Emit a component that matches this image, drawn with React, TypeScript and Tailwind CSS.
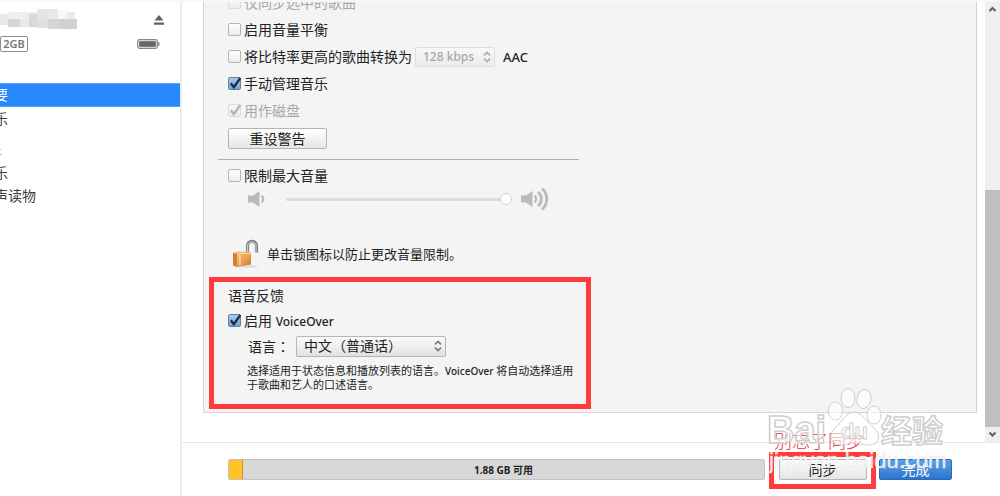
import React, { useState } from 'react';
import clsx from 'clsx';

type CheckProps = {
    id: string;
    label: React.ReactNode;
    checked?: boolean;
    disabled?: boolean;
};

function Check({ id, label, checked = false, disabled = false }: CheckProps) {
    const [on, setOn] = useState(checked);

    return (
        <div className="flex items-center gap-[3px]">
            <span className="relative flex">
                <input
                    id={id}
                    type="checkbox"
                    checked={on}
                    disabled={disabled}
                    onChange={(e) => setOn(e.target.checked)}
                    className="h-[13px] w-[13px] appearance-none rounded-xs border border-[#b4b4b4] bg-linear-to-b from-white to-[#ececec] checked:border-[#5f83a8] checked:from-[#a9c8e6] checked:to-[#7ba5cf] disabled:border-[#dcdcdc] disabled:from-[#f6f6f6] disabled:to-[#ededed]"
                />
                {on && (
                    <svg viewBox="0 0 15 15" className="pointer-events-none absolute -top-px left-0 h-[15px] w-[15px]" fill="none">
                        <path d="M2.8 7.2L5.8 11.2L12.4 2" stroke={disabled ? '#b5b5b5' : '#1b2f4b'} strokeWidth="2.3" />
                    </svg>
                )}
            </span>
            <label htmlFor={id} className={clsx('whitespace-nowrap', disabled && 'text-[#a8a8a8]')}>{label}</label>
        </div>
    );
}

function Chevrons({ color }: { color: string }) {
    return (
        <svg viewBox="0 0 8 12" className="pointer-events-none absolute top-1/2 right-1 h-3 w-2 -translate-y-1/2" fill="none" stroke={color} strokeWidth="1.5">
            <path d="M1 4.4L4 1.4L7 4.4M1 7.6L4 10.6L7 7.6" />
        </svg>
    );
}

function Speaker({ loud = false }: { loud?: boolean }) {
    return (
        <svg viewBox={loud ? '0 0 28 24' : '0 0 19 24'} className={clsx('h-6 shrink-0', loud ? 'w-7' : 'w-[19px]')} fill="none" stroke="#bababa" strokeWidth="2">
            <path d="M0 8.5H5L11.5 4V20L5 15.5H0Z" fill="#bababa" stroke="none" />
            <path d="M13.5 8.7A4 4 0 0 1 13.5 15.3" strokeWidth="2.3" />
            {loud && <path d="M17 5A9 9 0 0 1 17 19M21 1.5A14 14 0 0 1 21 22.5" strokeWidth="2.8" />}
        </svg>
    );
}

function Padlock() {
    return (
        <svg viewBox="0 0 28 30" className="h-[30px] w-7 shrink-0" fill="none">
            <defs>
                <linearGradient id="brass" x1="0" y1="0" x2="1" y2="1">
                    <stop offset="0" stopColor="#f6c67c" />
                    <stop offset="0.5" stopColor="#efa955" />
                    <stop offset="1" stopColor="#c9762b" />
                </linearGradient>
            </defs>
            <ellipse cx="16" cy="27.5" rx="10" ry="1.5" fill="#dedede" />
            <path d="M15.5 14V7C15.5 0.8 24.5 0.8 24.5 7V13.5" stroke="#858585" strokeWidth="3.2" />
            <path d="M15.5 13V7C15.5 1.8 24 1.8 24 7V13" stroke="#c9c9c9" strokeWidth="1" />
            <path d="M1 14L5 12.5L19 13V25.5L5 28L1 26.5Z" fill="url(#brass)" />
            <path d="M1 14L5 14.8V28L1 26.5Z" fill="#cf8237" />
            <path d="M5 14.8L19 14" stroke="#fbdcae" strokeWidth="1" />
            <path d="M8 16V26" stroke="#f9d6a0" strokeWidth="1.6" />
        </svg>
    );
}

// blocks covering the device name
const nameBlocks: [number, number, number, number, string][] = [
    [0, 6, 10, 11, '#e9e9e9'],
    [8, 4, 12, 12, '#f0eeee'],
    [20, 4, 18, 8, '#eeecec'],
    [8, 11, 12, 8, '#d7d5d5'],
    [20, 12, 10, 7, '#ebe8e8'],
    [29, 6, 9, 13, '#ddd8d8'],
    [37, 1, 12, 11, '#e2e6e7'],
    [37, 11, 12, 9, '#dce1e3'],
    [49, 1, 9, 11, '#e8eaea'],
    [58, 2, 10, 10, '#f5f8fa'],
    [67, 4, 8, 8, '#e9ebec'],
    [48, 11, 12, 10, '#d4d5d5'],
    [60, 11, 17, 10, '#d0d1d2'],
];

function Sidebar() {
    return (
        <aside className="w-[182px] shrink-0 overflow-hidden border-r-2 border-[#ececec] bg-white pt-[6px]">
            <div className="flex items-start justify-between pr-4">
                <svg viewBox="0 0 78 22" className="h-[22px] w-[78px]">
                    {nameBlocks.map(([x, y, w, h, fill], i) => (
                        <rect key={i} x={x} y={y} width={w} height={h} fill={fill} />
                    ))}
                </svg>
                <button type="button" aria-label="弹出" className="mt-[7px]">
                    <svg viewBox="0 0 10 10" className="h-[10px] w-[10px]" fill="#626262">
                        <path d="M5 0L9.5 5.5H0.5ZM0 7.6H10V9.7H0Z" />
                    </svg>
                </button>
            </div>
            <div className="mt-[6px] flex items-center justify-between pr-5">
                <span className="flex h-4 w-7 items-center justify-center rounded-xs border border-[#8c8c8c] text-[11px] font-semibold text-[#777]">2GB</span>
                <svg viewBox="0 0 23 10" className="h-[10px] w-[23px]">
                    <rect x="0.7" y="0.7" width="19.6" height="8.6" rx="1.8" fill="#eee" stroke="#858585" strokeWidth="1.2" />
                    <rect x="2.2" y="2.2" width="16.6" height="5.6" fill="#666" />
                    <path d="M21 3.2H22.4V6.8H21Z" fill="#858585" />
                </svg>
            </div>
            <nav className="mt-[31px] flex flex-col whitespace-nowrap text-[#3c3c3c]">
                <a href="#summary" className="flex h-6 items-center border-y border-[#5aa2f8] bg-[#2688fb] text-white"><span className="-ml-5">摘要</span></a>
                <a href="#music" className="flex h-[23px] items-center"><span className="-ml-5">音乐</span></a>
                <h2 className="mt-[13px] -ml-[31px] flex h-4 items-center text-[11px] text-[#8795a3]">设备上</h2>
                <a href="#device-music" className="mt-[2px] flex h-[23px] items-center"><span className="-ml-5">音乐</span></a>
                <a href="#audiobooks" className="flex h-[23px] items-center"><span className="-ml-5">有声读物</span></a>
            </nav>
        </aside>
    );
}

function VoiceFeedback() {
    return (
        <section className="mt-2 ml-[5px] w-[382px] border-5 border-[#ff3b3b] pt-[2px] pb-3 pl-[14px]">
            <h3 className="flex h-6 items-center">语音反馈</h3>
            <div className="flex h-[25px] items-center">
                <Check id="voiceover" checked label={<>启用 <span className="text-xs font-medium">VoiceOver</span></>} />
            </div>
            <div className="ml-5 flex h-[26px] items-center gap-1.5">
                <label htmlFor="language">语言<span className="font-['Noto_Sans_CJK_JP',sans-serif]">：</span></label>
                <span className="relative flex">
                    <select id="language" className="h-[21px] w-[150px] appearance-none rounded-xs border border-[#b5b5b5] bg-linear-to-b from-[#fbfbfb] to-[#e2e2e2] pl-[7px] leading-[18px]">
                        <option>中文（普通话）</option>
                    </select>
                    <Chevrons color="#777" />
                </span>
            </div>
            <p className="mt-[5px] ml-[19px] text-[11px] leading-[14px]">
                选择适用于状态信息和播放列表的语言。<span className="text-[10px] font-medium">VoiceOver</span> 将自动选择适用<br />于歌曲和艺人的口述语言。
            </p>
        </section>
    );
}

function Settings() {
    return (
        <div className="mr-2 ml-[21px] flex-1 self-start overflow-hidden border-x border-b border-[#d4d4d4] bg-[#f4f4f4] pb-[3px]">
            <div className="-mt-[13px] pl-6 [&>div]:h-[27px]">
                <div className="flex items-center"><Check id="selected-only" disabled label="仅同步选中的歌曲" /></div>
                <div className="flex items-center"><Check id="balance" label="启用音量平衡" /></div>
                <div className="flex items-center">
                    <Check id="convert" label="将比特率更高的歌曲转换为" />
                    <span className="relative ml-[3px] flex">
                        <select aria-label="比特率" disabled className="h-5 w-20 appearance-none rounded-xs border border-[#dedede] bg-linear-to-b from-[#f8f8f8] to-[#ececec] pl-[7px] text-xs font-medium text-[#a8a8a8] opacity-100">
                            <option>128 kbps</option>
                        </select>
                        <Chevrons color="#aaa" />
                    </span>
                    <span className="ml-2 text-[13px] font-medium">AAC</span>
                </div>
                <div className="flex items-center"><Check id="manual" checked label="手动管理音乐" /></div>
                <div className="flex items-center"><Check id="disk" checked disabled label="用作磁盘" /></div>
            </div>
            <button type="button" className="mt-1 ml-6 flex h-[21px] w-[99px] items-center justify-center rounded-xs border border-[#b5b5b5] bg-linear-to-b from-white to-[#e6e6e6]">重设警告</button>
            <hr className="mt-[10px] ml-[14px] w-[361px] border-[#b0b0b0]" />
            <div className="mt-[2px] ml-6 flex h-[27px] items-center"><Check id="limit" label="限制最大音量" /></div>
            <div className="ml-11 flex h-5 items-center">
                <Speaker />
                <input
                    type="range"
                    aria-label="最大音量"
                    defaultValue={100}
                    disabled
                    className="mr-[9px] ml-[19px] h-3 w-[226px] appearance-none bg-transparent [&::-webkit-slider-runnable-track]:h-[3px] [&::-webkit-slider-runnable-track]:rounded-full [&::-webkit-slider-runnable-track]:bg-[#dcdcdc] [&::-webkit-slider-thumb]:-mt-[5px] [&::-webkit-slider-thumb]:h-3 [&::-webkit-slider-thumb]:w-3 [&::-webkit-slider-thumb]:appearance-none [&::-webkit-slider-thumb]:rounded-full [&::-webkit-slider-thumb]:border [&::-webkit-slider-thumb]:border-[#d4d4d4] [&::-webkit-slider-thumb]:bg-white"
                />
                <Speaker loud />
            </div>
            <div className="mt-[30px] ml-7 flex h-[30px] items-center gap-[7px]">
                <Padlock />
                <p className="text-[13px]">单击锁图标以防止更改音量限制。</p>
            </div>
            <VoiceFeedback />
        </div>
    );
}

function ScrollTrack() {
    return (
        <div className="flex w-[15px] shrink-0 flex-col bg-[#efefef]">
            <svg viewBox="0 0 15 15" className="h-[15px] w-[15px]" fill="none" stroke="#606060" strokeWidth="2"><path d="M4.5 9L7.5 6L10.5 9" /></svg>
            <div className="flex-[173]" />
            <div className="flex-[237] bg-[#bfbfbf]" />
            <svg viewBox="0 0 15 15" className="h-[15px] w-[15px]" fill="none" stroke="#606060" strokeWidth="2"><path d="M4.5 5.5L7.5 8.5L10.5 5.5" /></svg>
        </div>
    );
}

function Footer() {
    return (
        <footer className="relative flex h-[54px] shrink-0 items-center border-t border-[#e8e8e8] bg-white pr-12 pl-[46px]">
            <div className="flex h-[21px] flex-1 overflow-hidden rounded-xs border border-[#c4c4c4] bg-[#d8d8d8]">
                <span className="w-[14px] border-r border-[#c99a1c] bg-[#fec425]" />
                <span className="flex flex-1 items-center justify-center text-[10px] font-bold text-[#222]">1.88 GB 可用</span>
            </div>
            <div className="mt-[2px] ml-1 flex h-[37px] w-[107px] items-start justify-center border-5 border-[#ff3b3b] pt-[2px]">
                <button type="button" className="flex h-[21px] w-[88px] items-center justify-center rounded-xs border border-[#b5b5b5] bg-linear-to-b from-white to-[#e4e4e4]">同步</button>
            </div>
            <button type="button" className="ml-[3px] flex h-[21px] w-[73px] items-center justify-center rounded-xs border border-[#2c69b4] bg-linear-to-b from-[#57a2e6] to-[#2f74cf] text-white">完成</button>
            <p className="absolute -top-[15px] right-[136px] text-[18px] leading-[26px] font-light whitespace-nowrap text-[#e53030]">别忘了同步</p>
            <Watermark />
        </footer>
    );
}

function Watermark() {
    return (
        <svg viewBox="0 0 180 90" className="pointer-events-none absolute right-[52px] bottom-[19px] h-[90px] w-[180px]" stroke="#cfcfcf" strokeWidth="1" fill="#fff" fillOpacity="0.6">
            <ellipse cx="67.5" cy="24" rx="7" ry="9" />
            <ellipse cx="80" cy="11" rx="7" ry="9.5" />
            <ellipse cx="96" cy="12" rx="7" ry="9.5" transform="rotate(12 96 12)" />
            <ellipse cx="106" cy="28" rx="7" ry="9" />
            <path d="M86 25C78 25 74 35 68 40C59 48 63 58 73 58C79 58 82 56 86 56C91 56 94 58 101 58C111 58 114 48 106 41C99 36 95 25 86 25Z" />
            <g className="font-['Liberation_Sans','Noto_Sans_CJK_SC',sans-serif]" fontWeight="bold">
                <text x="-1" y="56" fontSize="38" strokeWidth="1.5">Bai</text>
                <text x="73" y="52" fontSize="22">du</text>
                <text x="113" y="55" fontSize="31" strokeWidth="1.5">经验</text>
            </g>
            <text x="1" y="81" fontSize="22" fillOpacity="0.85" stroke="#e4e4e4" strokeWidth="0.5" className="font-['Liberation_Sans',sans-serif]">jingyan.baidu.com</text>
        </svg>
    );
}

export default function App() {
    return (
        <div className="flex h-screen overflow-hidden border-t-2 border-[#f7f7f7] bg-white font-['Noto_Sans','Noto_Sans_CJK_SC',sans-serif] text-sm leading-5 text-[#222]">
            <Sidebar />
            <main className="flex min-w-0 flex-1 flex-col">
                <div className="flex min-h-0 flex-1 overflow-hidden">
                    <Settings />
                    <ScrollTrack />
                </div>
                <Footer />
            </main>
        </div>
    );
}
